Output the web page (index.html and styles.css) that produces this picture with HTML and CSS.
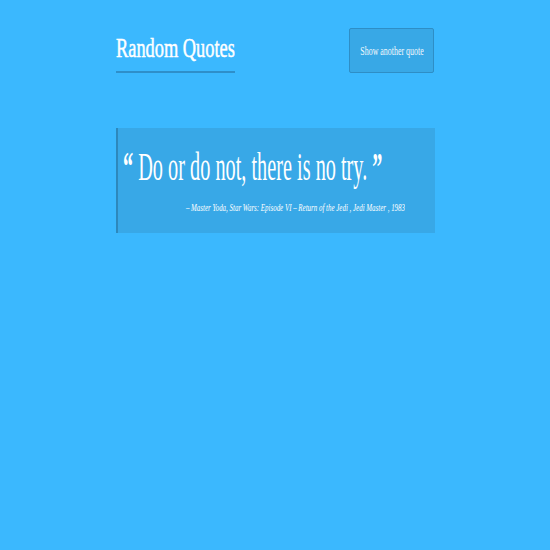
FILE: index.html
```html
<!DOCTYPE html>
<html>
<head>
<meta charset="utf-8">
<link rel="stylesheet" href="styles.css">
</head>
<body>
<div class="wrap">
  <header class="top">
    <h1 class="title">Random Quotes</h1>
    <button class="btn"><span class="btn-label">Show another quote</span></button>
  </header>
  <blockquote class="quote">
    <p class="text"><span class="text-inner"><b class="mark">“</b> Do or do not, there is no try. <b class="mark">”</b></span></p>
    <p class="cite"><span class="cite-inner">– Master Yoda, Star Wars: Episode VI – Return of the Jedi , Jedi Master , 1983</span></p>
  </blockquote>
</div>
</body>
</html>
```
FILE: styles.css
```css
html, body { margin: 0; padding: 0; }
body {
  background: #3bb8fe;
  width: 550px;
  height: 550px;
  overflow: hidden;
  font-family: "Liberation Serif", "DejaVu Serif", serif;
  color: #fff;
}
.wrap {
  width: 320px;
  margin: 0 auto;
  padding-top: 28px;
}
.top {
  display: flex;
  justify-content: space-between;
  align-items: flex-start;
  height: 44px;
}
.title {
  margin: 5px 0 0 1px;
  font-size: 27px;
  font-weight: normal;
  line-height: 30px;
  white-space: nowrap;
  padding-bottom: 8px;
  border-bottom: 2px solid #2e8fca;
  -webkit-text-stroke: 0.5px #fff;
  transform: scaleX(0.68);
  transform-origin: left top;
}
.btn {
  flex: none;
  width: 85px;
  height: 45px;
  margin-right: 1px;
  background: #38a8e6;
  border: 1px solid #2e8ec6;
  border-radius: 2px;
  color: #f2f8fc;
  font-family: inherit;
  font-size: 12px;
  padding: 0;
  display: flex;
  justify-content: center;
  align-items: center;
  overflow: hidden;
}
.btn-label {
  display: inline-block;
  white-space: nowrap;
  transform: scaleX(0.66);
  margin-top: 2px;
}
.quote {
  margin: 56px 0 0 1px;
  background: #38a8e7;
  border-left: 2px solid #2d88bc;
  height: 105px;
  box-sizing: border-box;
  padding: 19px 0 0 5px;
  overflow: hidden;
}
.text {
  margin: 0;
  font-size: 39px;
  line-height: 40px;
  white-space: nowrap;
}
.text-inner {
  display: inline-block;
  transform: scaleX(0.52);
  transform-origin: left top;
}
.mark { font-weight: bold; }
.cite {
  margin: 15px 0 0 0;
  display: flex;
  justify-content: flex-end;
  padding-right: 30px;
  font-size: 10.5px;
  line-height: 12px;
  font-style: italic;
  white-space: nowrap;
}
.cite-inner {
  display: inline-block;
  transform: scaleX(0.66);
  transform-origin: right top;
}
```
